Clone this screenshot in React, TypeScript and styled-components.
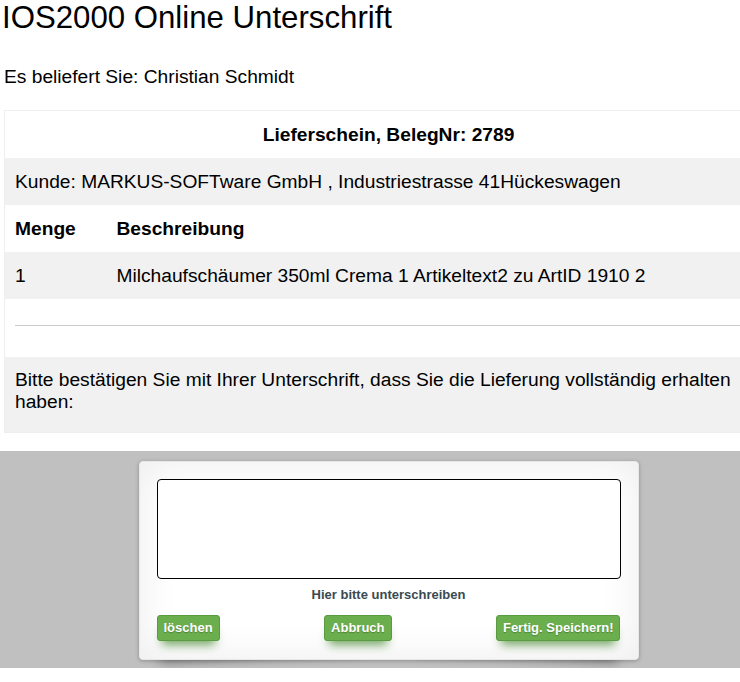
import React from "react";
import styled, { createGlobalStyle } from "styled-components";

const GlobalStyle = createGlobalStyle`
  *, *::before, *::after { box-sizing: border-box; }
  html, body { margin: 0; padding: 0; }
  body {
    overflow-x: hidden;
    background: #fff;
    color: #000;
    font-family: "Liberation Sans", Arial, sans-serif;
    font-size: 19.2px;
  }
`;

const Page = styled.div`
  width: 777px;
`;

const Header = styled.header`
  padding: 0 4px;
`;

const Title = styled.h1`
  margin: 0 0 0 -2px;
  font-size: 31.2px;
  font-weight: 400;
  line-height: 36px;
`;

const Intro = styled.p`
  margin: 30px 0 22px;
  font-size: 19.2px;
  line-height: 22px;
`;

const Table = styled.table`
  margin: 0 4px;
  width: calc(100% - 8px);
  border-collapse: collapse;
  border: 1px solid #eeeeee;
  font-size: 19.2px;
`;

const Row = styled.tr<{ $striped?: boolean }>`
  background: ${(p) => (p.$striped ? "#f1f1f1" : "#ffffff")};
`;

const Cell = styled.td<{ $center?: boolean; $bold?: boolean; $width?: number }>`
  padding: 12px 10px;
  line-height: 23px;
  text-align: ${(p) => (p.$center ? "center" : "left")};
  font-weight: ${(p) => (p.$bold ? 700 : 400)};
  width: ${(p) => (p.$width ? `${p.$width}px` : "auto")};
  vertical-align: top;
`;

const HeadCell = styled.th<{ $width?: number }>`
  padding: 12px 10px;
  line-height: 23px;
  text-align: left;
  font-weight: 700;
  width: ${(p) => (p.$width ? `${p.$width}px` : "auto")};
`;

const RuleCell = styled.td`
  padding: 12px 0 12px 10px;
`;

const Rule = styled.hr`
  margin: 14px 0 19px;
  border: 0;
  border-top: 1px solid #cccccc;
  height: 0;
`;

const NoteCell = styled.td`
  padding: 12px 10px 19px;
  line-height: 22px;
`;

const SignArea = styled.section`
  position: relative;
  z-index: 0;
  margin-top: 18px;
  padding: 10px 0 8px;
  background: #c0c0c0;
  display: flex;
  justify-content: center;
`;

const Pad = styled.div`
  position: relative;
  width: 500px;
  padding: 17px 17px 18px;
  background: #fff;
  border: 1px solid #e8e8e8;
  border-radius: 4px;
  box-shadow: 0 1px 4px rgba(0, 0, 0, 0.27), 0 0 40px rgba(0, 0, 0, 0.08) inset;
  display: flex;
  flex-direction: column;

  &::before,
  &::after {
    position: absolute;
    z-index: -1;
    content: "";
    width: 40%;
    height: 10px;
    bottom: 10px;
    background: transparent;
    box-shadow: 0 8px 12px rgba(0, 0, 0, 0.4);
  }
  &::before {
    left: 20px;
    transform: skew(-3deg) rotate(-3deg);
  }
  &::after {
    right: 20px;
    transform: skew(3deg) rotate(3deg);
  }
`;

const Canvas = styled.div`
  height: 100px;
  border: 1px solid #000;
  border-radius: 4px;
  background: #fff;
`;

const Description = styled.div`
  margin-top: 8px;
  text-align: center;
  font-size: 13px;
  line-height: 15px;
  font-weight: 700;
  color: #3a4a51;
`;

const Actions = styled.div`
  margin-top: 13px;
  display: flex;
  justify-content: space-between;
  align-items: center;
`;

const Button = styled.button`
  font-family: "Liberation Sans", Arial, sans-serif;
  font-size: 13px;
  font-weight: 700;
  line-height: 16px;
  padding: 4px 6px;
  color: #fff;
  background: #6aae4e;
  border: 1px solid #5a9a40;
  border-radius: 3px;
  text-shadow: 0 1px 1px rgba(0, 0, 0, 0.25);
  box-shadow: 0 9px 10px -5px rgba(60, 130, 35, 0.7);
  cursor: pointer;
`;

export default function App() {
  return (
    <Page>
      <GlobalStyle />
      <Header>
        <Title>IOS2000 Online Unterschrift</Title>
        <Intro>Es beliefert Sie: Christian Schmidt</Intro>
      </Header>
      <Table>
        <tbody>
          <Row>
            <Cell colSpan={2} $center $bold>
              Lieferschein, BelegNr: 2789
            </Cell>
          </Row>
          <Row $striped>
            <Cell colSpan={2}>Kunde: MARKUS-SOFTware GmbH , Industriestrasse 41Hückeswagen</Cell>
          </Row>
          <Row>
            <HeadCell $width={102}>Menge</HeadCell>
            <HeadCell>Beschreibung</HeadCell>
          </Row>
          <Row $striped>
            <Cell $width={102}>1</Cell>
            <Cell>Milchaufschäumer 350ml Crema 1 Artikeltext2 zu ArtID 1910 2</Cell>
          </Row>
          <Row>
            <RuleCell colSpan={2}>
              <Rule />
            </RuleCell>
          </Row>
          <Row $striped>
            <NoteCell colSpan={2}>
              Bitte bestätigen Sie mit Ihrer Unterschrift, dass Sie die Lieferung vollständig erhalten haben:
            </NoteCell>
          </Row>
        </tbody>
      </Table>
      <SignArea>
        <Pad>
          <Canvas />
          <Description>Hier bitte unterschreiben</Description>
          <Actions>
            <Button type="button">löschen</Button>
            <Button type="button">Abbruch</Button>
            <Button type="button">Fertig. Speichern!</Button>
          </Actions>
        </Pad>
      </SignArea>
    </Page>
  );
}
